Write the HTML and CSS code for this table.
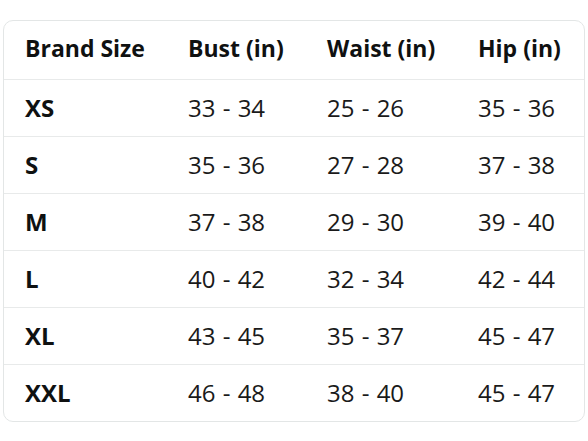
FILE: index.html
```html
<!DOCTYPE html>
<html>
<head>
<meta charset="utf-8">
<link rel="stylesheet" href="styles.css">
</head>
<body>
<div class="wrap">
<table class="chart">
  <colgroup>
    <col class="c1"><col class="c2"><col class="c3"><col class="c4">
  </colgroup>
  <thead>
    <tr><th>Brand Size</th><th>Bust (in)</th><th>Waist (in)</th><th>Hip (in)</th></tr>
  </thead>
  <tbody>
    <tr><th>XS</th><td>33 - 34</td><td>25 - 26</td><td>35 - 36</td></tr>
    <tr><th>S</th><td>35 - 36</td><td>27 - 28</td><td>37 - 38</td></tr>
    <tr><th>M</th><td>37 - 38</td><td>29 - 30</td><td>39 - 40</td></tr>
    <tr><th>L</th><td>40 - 42</td><td>32 - 34</td><td>42 - 44</td></tr>
    <tr><th>XL</th><td>43 - 45</td><td>35 - 37</td><td>45 - 47</td></tr>
    <tr><th>XXL</th><td>46 - 48</td><td>38 - 40</td><td>45 - 47</td></tr>
  </tbody>
</table>
</div>
</body>
</html>
```
FILE: styles.css
```css
html, body {
  margin: 0;
  padding: 0;
  background: #ffffff;
}
.wrap {
  padding: 20px 3px 0 3px;
}
.chart {
  width: 582px;
  border-collapse: separate;
  border-spacing: 0;
  border: 1px solid #e3e6e6;
  border-radius: 10px;
  font-family: "Open Sans", "Noto Sans", sans-serif;
  color: #0f1111;
  table-layout: fixed;
}
.c1 { width: 163px; }
.c2 { width: 138px; }
.c3 { width: 152px; }
.c4 { width: 127px; }
.chart th, .chart td {
  text-align: left;
  padding: 0 0 0 21px;
  height: 56px;
  border-top: 1px solid #e8eaea;
  white-space: nowrap;
  vertical-align: middle;
  line-height: 1;
}
.chart thead th {
  border-top: none;
  height: 55px;
  font-size: 23px;
  padding-bottom: 3px;
}
.chart tbody th {
  font-size: 24px;
  font-weight: 700;
}
.chart td {
  font-size: 24px;
  font-weight: 400;
  word-spacing: 1px;
  color: #1a1a1a;
}
.chart tr > *:nth-child(3) { padding-left: 22px; }
```
